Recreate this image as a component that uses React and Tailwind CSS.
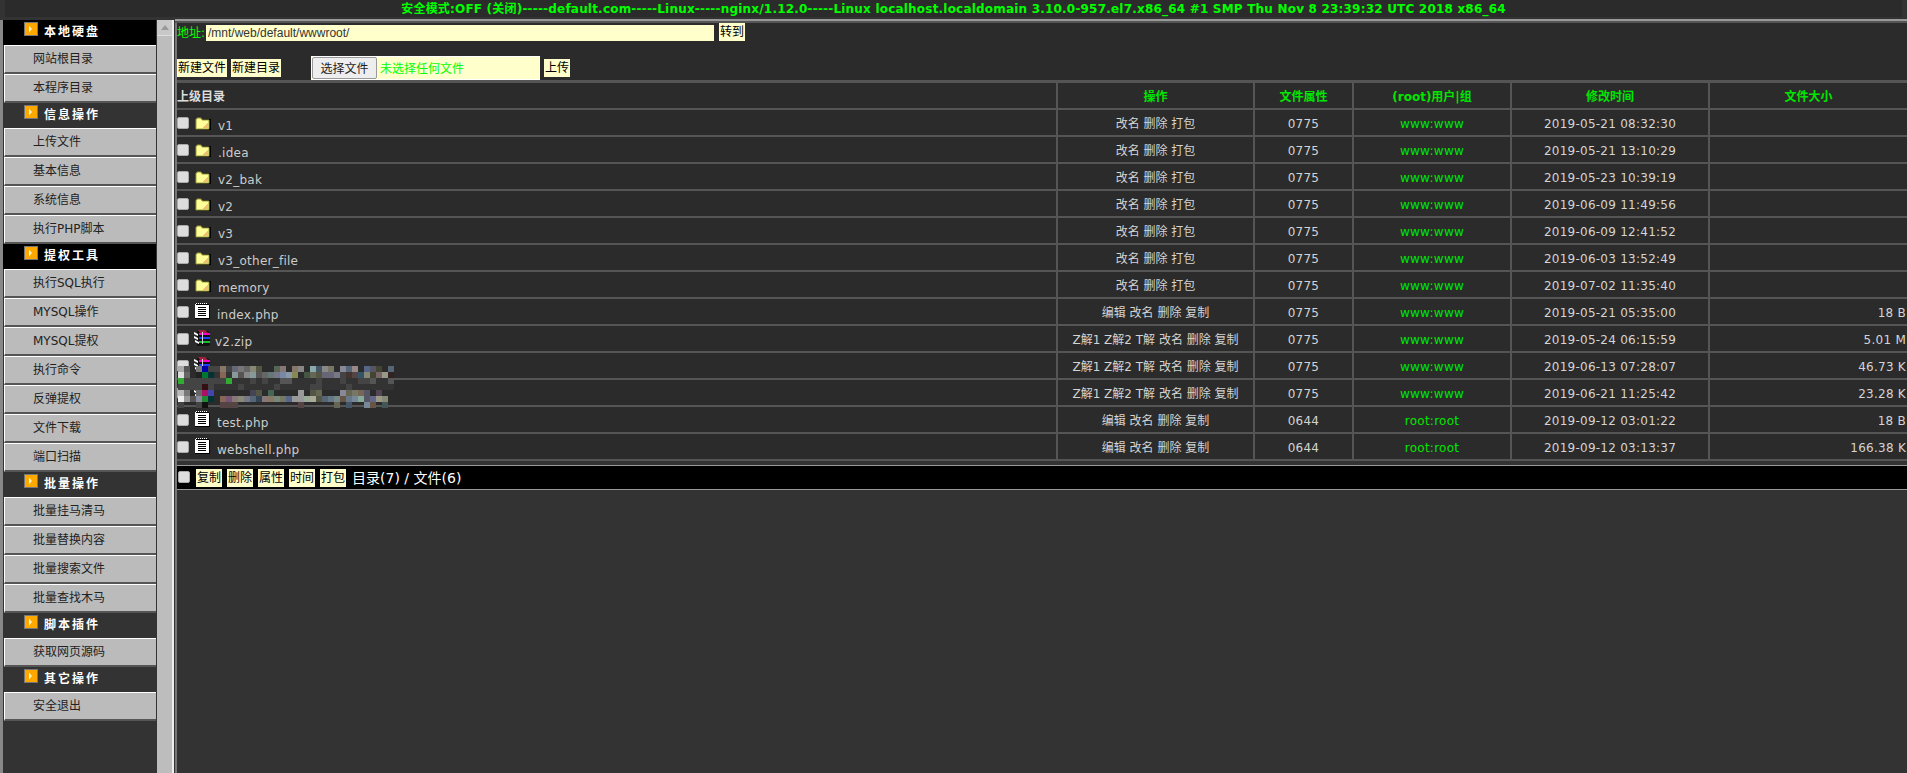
import React from 'react';

const FONT = "font-['DejaVu_Sans','Noto_Sans_CJK_SC',sans-serif]";

const menu = [
    { title: '本地硬盘', black: true, items: ['网站根目录', '本程序目录'] },
    { title: '信息操作', items: ['上传文件', '基本信息', '系统信息', '执行PHP脚本'] },
    { title: '提权工具', black: true, items: ['执行SQL执行', 'MYSQL操作', 'MYSQL提权', '执行命令', '反弹提权', '文件下载', '端口扫描'] },
    { title: '批量操作', items: ['批量挂马清马', '批量替换内容', '批量搜索文件', '批量查找木马'] },
    { title: '脚本插件', items: ['获取网页源码'] },
    { title: '其它操作', items: ['安全退出'] },
];

const DIR_OPS = '改名 删除 打包';
const FILE_OPS = '编辑 改名 删除 复制';
const ZIP_OPS = 'Z解1 Z解2 T解 改名 删除 复制';

const files = [
    { name: 'v1', type: 'dir', ops: DIR_OPS, mode: '0775', owner: 'www:www', time: '2019-05-21 08:32:30', size: '' },
    { name: '.idea', type: 'dir', ops: DIR_OPS, mode: '0775', owner: 'www:www', time: '2019-05-21 13:10:29', size: '' },
    { name: 'v2_bak', type: 'dir', ops: DIR_OPS, mode: '0775', owner: 'www:www', time: '2019-05-23 10:39:19', size: '' },
    { name: 'v2', type: 'dir', ops: DIR_OPS, mode: '0775', owner: 'www:www', time: '2019-06-09 11:49:56', size: '' },
    { name: 'v3', type: 'dir', ops: DIR_OPS, mode: '0775', owner: 'www:www', time: '2019-06-09 12:41:52', size: '' },
    { name: 'v3_other_file', type: 'dir', ops: DIR_OPS, mode: '0775', owner: 'www:www', time: '2019-06-03 13:52:49', size: '' },
    { name: 'memory', type: 'dir', ops: DIR_OPS, mode: '0775', owner: 'www:www', time: '2019-07-02 11:35:40', size: '' },
    { name: 'index.php', type: 'doc', ops: FILE_OPS, mode: '0775', owner: 'www:www', time: '2019-05-21 05:35:00', size: '18 B' },
    { name: 'v2.zip', type: 'zip', ops: ZIP_OPS, mode: '0775', owner: 'www:www', time: '2019-05-24 06:15:59', size: '5.01 M' },
    { name: '', type: 'zip', ops: ZIP_OPS, mode: '0775', owner: 'www:www', time: '2019-06-13 07:28:07', size: '46.73 K' },
    { name: '', type: 'zip', ops: ZIP_OPS, mode: '0775', owner: 'www:www', time: '2019-06-21 11:25:42', size: '23.28 K' },
    { name: 'test.php', type: 'doc', ops: FILE_OPS, mode: '0644', owner: 'root:root', time: '2019-09-12 03:01:22', size: '18 B' },
    { name: 'webshell.php', type: 'doc', ops: FILE_OPS, mode: '0644', owner: 'root:root', time: '2019-09-12 03:13:37', size: '166.38 K' },
];

// blurred file names, one string per 6px row of the mosaic
const mosaic = [
    'aaa 555 . 777 00a 444 444 876 444 667 777 666 887 554 . . 565 877 . 876 888 . 8aa 456 888 776 . 889 567 988 . 568 556 443 . 567',
    'ddd 666 . 222 073 033 333 865 333 899 555 888 899 555 666 677 778 78a 89a 885 . 454 665 554 667 667 778 444 433 544 356 887 443 766 998 322',
    '3a3 444 444 444 444 444 444 444 3a3 . . . 444 . 444 . . 555 555 . . . . 444 . . . 444 . . 444 444 555 . . 555',
    '444 444 444 444 311 444 . . . . 444 . . . . . 444 . . . . . 444 444 . . . . 444 . . . . . .',
    'bbb 777 . 666 a16 44a . . . . . . 445 554 . 465 . . . . 999 . 554 665 . . . 889 665 776 765 556 . 545 . .',
    'eee 999 555 889 283 033 . 865 757 877 887 778 567 345 877 876 787 776 568 999 999 9a9 aa9 554 567 678 788 654 678 789 8a9 556 668 998 887',
    '444 . . 444 111 . . 544 544 544 . . . . . . . . . . 544 . . . . . 665 . 456 . . 789 654 . 455',
];

const FolderIcon = () => (
    <svg width="16" height="13" viewBox="0 0 16 13" className="shrink-0 ml-[1px] mr-[7px]">
        <rect x="2" y="2" width="14" height="11" fill="#000" />
        <path d="M1 2h1V1h4v1h1v1h7v9H1z" fill="#ffff99" stroke="#99993a" strokeWidth="1" />
        <path d="M8 11h5V6h-1v1h-1v1h-1v1H9v1H8z" fill="#f0c070" />
    </svg>
);

const DocIcon = () => (
    <svg width="15" height="16" viewBox="0 0 15 16" className="shrink-0 ml-[1px] mr-[7px]">
        <rect x="0" y="1" width="14" height="15" fill="#fff" />
        <path d="M1 0.5h12" stroke="#fff" strokeDasharray="1 1" />
        <rect x="1" y="1" width="13" height="1" fill="#000" />
        <rect x="14" y="2" width="1" height="14" fill="#000" />
        <rect x="0" y="15" width="15" height="1" fill="#000" />
        <path d="M3 4.5h8M3 6.5h8M3 8.5h8M3 10.5h8M3 12.5h8" stroke="#000" strokeWidth="1" />
    </svg>
);

const ZipIcon = () => (
    <svg width="16" height="16" viewBox="0 0 16 16" className="shrink-0 mr-[5px]">
        <path d="M3 1h10l3 2v12l-2 1H3z" fill="#111" />
        <path d="M4 0h7l3 3H6z" fill="#a02040" />
        <path d="M0 2l4 2v2L0 4zM0 6l4 2v2L0 8zM1 10l4 2v2l-4-2z" fill="#fff" />
        <rect x="5" y="3" width="11" height="2" fill="#ff00cc" />
        <rect x="5" y="7" width="11" height="2" fill="#2040ff" />
        <rect x="5" y="11" width="11" height="2" fill="#10c030" />
        <rect x="8" y="2" width="1" height="12" fill="#d0d0d0" />
    </svg>
);

const ArrowIcon = () => (
    <svg width="14" height="14" viewBox="0 0 14 14" className="shrink-0">
        <rect x="0.5" y="0.5" width="13" height="13" fill="#ffa800" stroke="#777" />
        <path d="M5 3.5l3 3.5-3 3.5z" fill="#fff3c0" />
    </svg>
);

const Check = ({ className = '' }) => (
    <input
        type="checkbox"
        className={`appearance-none w-[12px] h-[12px] rounded-[2px] bg-[#dddddd] border border-[#aaaaaa] shrink-0 ${className}`}
    />
);

const YellowBtn = ({ children, className = '' }) => (
    <button className={`h-[18px] px-[1px] pt-[1px] bg-[#ffffcc] text-black text-[12px] leading-[17px] ${className}`}>
        {children}
    </button>
);

const Sidebar = () => (
    <div className="w-[153px] shrink-0 bg-[#333333]">
        {menu.map((group) => (
            <div key={group.title}>
                <div className={`h-[25px] pl-[21px] flex items-start gap-[6px] pt-[2px] ${group.black ? 'bg-black' : 'bg-[#333333]'}`}>
                    <ArrowIcon />
                    <span className="text-white font-bold text-[12px] leading-[20px] tracking-[2px]">{group.title}</span>
                </div>
                {group.items.map((item) => (
                    <div
                        key={item}
                        className="h-[29px] ml-[1px] pl-[28px] bg-[#bbbbbb] border-t border-l border-t-white border-l-white border-b-2 border-b-[#555555] text-[#222222] text-[12px] leading-[26px]"
                    >
                        {item}
                    </div>
                ))}
            </div>
        ))}
    </div>
);

const Scrollbar = () => (
    <div className="w-[15px] ml-[1px] shrink-0 bg-[#bdbdbd] flex flex-col">
        <div className="h-[16px] bg-[#c8c8c8] border-b border-[#dddddd] flex items-center justify-center">
            <div className="w-0 h-0 border-l-[4px] border-r-[4px] border-b-[5px] border-l-transparent border-r-transparent border-b-[#999999]" />
        </div>
    </div>
);

const Mosaic = () => (
    <svg width="216" height="42" viewBox="0 0 216 42" className="absolute left-[1px] top-[283px]">
        <rect x="0" y="12" width="216" height="12" fill="#333333" />
        {mosaic.map((row, y) =>
            row.split(' ').map((color, x) =>
                color === '.' ? null : (
                    <rect key={`${x}-${y}`} x={x * 6} y={y * 6} width="6" height="6" fill={`#${color}`} />
                )
            )
        )}
    </svg>
);

const FileRow = ({ file }) => {
    const cell = 'h-[27px] p-0 pt-[2px] border-r-2 border-b-2 border-[#555555] text-center align-middle';
    return (
        <tr>
            <td className="h-[27px] p-0 border-r-2 border-b-2 border-[#555555]">
                <div className="flex items-start h-[25px]">
                    <Check className="mt-[7px] mr-[5px]" />
                    <span className={file.type === 'dir' ? 'mt-[7px] flex' : 'mt-[4px] flex'}>
                        {file.type === 'dir' && <FolderIcon />}
                        {file.type === 'doc' && <DocIcon />}
                        {file.type === 'zip' && <ZipIcon />}
                    </span>
                    <span className="mt-[7px] leading-[18px] text-[#cccccc] tracking-[0.25px]">{file.name}</span>
                </div>
            </td>
            <td className={`${cell} text-[#d4d4d4]`}>{file.ops}</td>
            <td className={`${cell} text-[#d4d4d4] tracking-[0.25px]`}>{file.mode}</td>
            <td className={`${cell} text-[#00e600] tracking-[0.25px]`}>{file.owner}</td>
            <td className={`${cell} text-[#d4d4d4] tracking-[0.25px]`}>{file.time}</td>
            <td className="h-[27px] p-0 pt-[2px] pr-[1px] border-b-2 border-[#555555] text-right text-[#d4d4d4] tracking-[0.25px]">{file.size}</td>
        </tr>
    );
};

const FileTable = () => {
    const head = 'h-[27px] p-0 pt-[3px] border-r-2 border-b-2 border-[#555555] text-center font-bold text-[#00e600]';
    return (
        <div className="relative border-t-[3px] border-[#555555]">
            <table className="table-fixed w-[1730px] border-separate border-spacing-0 bg-[#2b2b2b] text-[12px]">
                <colgroup>
                    <col className="w-[881px]" />
                    <col className="w-[197px]" />
                    <col className="w-[99px]" />
                    <col className="w-[158px]" />
                    <col className="w-[198px]" />
                    <col className="w-[197px]" />
                </colgroup>
                <thead>
                    <tr>
                        <th className="h-[27px] p-0 pt-[3px] border-r-2 border-b-2 border-[#555555] text-left font-bold text-[#dddddd]">上级目录</th>
                        <th className={head}>操作</th>
                        <th className={head}>文件属性</th>
                        <th className={head}>(root)用户|组</th>
                        <th className={head}>修改时间</th>
                        <th className="h-[27px] p-0 pt-[3px] border-b-2 border-[#555555] text-center font-bold text-[#00e600]">文件大小</th>
                    </tr>
                </thead>
                <tbody>
                    {files.map((file) => (
                        <FileRow key={file.time} file={file} />
                    ))}
                </tbody>
            </table>
            <Mosaic />
        </div>
    );
};

export default function App() {
    return (
        <div className={`h-[773px] w-[1907px] overflow-hidden bg-[#333333] text-[12px] ${FONT}`}>
            <div className="h-[17px] mx-[5px] bg-[#2b2b2b] text-center font-bold text-[#00ff00] leading-[18px] tracking-[0.2px]">
                安全模式:OFF (关闭)-----default.com-----Linux-----nginx/1.12.0-----Linux localhost.localdomain 3.10.0-957.el7.x86_64 #1 SMP Thu Nov 8 23:39:32 UTC 2018 x86_64
            </div>
            <div className="h-[3px]" />
            <div className="flex h-[753px] border-l-[3px] border-[#888888]">
                <Sidebar />
                <Scrollbar />
                <div className="w-[2px] shrink-0 bg-[#eeeeee]" />
                <div className="w-[1px] shrink-0 bg-[#333333]" />
                <div className="flex-1 min-w-0 flex flex-col border-l-2 border-[#777777]">
                    <div className="relative">
                        <div className="absolute -top-[1px] -left-[2px] w-[1732px] h-[4px] bg-[#999999] border-b-2 border-[#555555]" />
                    </div>
                    <div className="h-[60px] bg-[#2b2b2b] pt-[3px]">
                        <div className="flex items-end h-[18px]">
                            <span className="text-[#00ff00] w-[29px] shrink-0 leading-[16px]">地址:</span>
                            <input
                                readOnly
                                value="/mnt/web/default/wwwroot/"
                                className="w-[508px] h-[16px] bg-[#ffffcc] text-[#333333] text-[12px] font-['Liberation_Sans',sans-serif] px-[2px] outline-none"
                            />
                            <YellowBtn className="ml-[5px]">转到</YellowBtn>
                        </div>
                        <div className="flex items-end h-[39px]">
                            <div className="flex items-center gap-[4px] mb-[3px]">
                                <YellowBtn>新建文件</YellowBtn>
                                <YellowBtn>新建目录</YellowBtn>
                            </div>
                            <div className="ml-[30px] w-[229px] h-[24px] bg-[#ffffcc] border border-white flex items-center">
                                <button className="w-[65px] h-[22px] pt-[1px] bg-[#eeeeee] border border-[#999999] rounded-[2px] text-[#222222] text-[12px]">选择文件</button>
                                <span className="ml-[3px] pt-[1px] text-[#00ff00]">未选择任何文件</span>
                            </div>
                            <YellowBtn className="ml-[4px] mb-[3px]">上传</YellowBtn>
                        </div>
                    </div>
                    <FileTable />
                    <div className="mt-[4px] h-[25px] bg-black border-y border-[#999999] flex items-center text-white">
                        <Check className="ml-[1px] mr-[6px] -mt-[1px]" />
                        <div className="flex items-center gap-[5px]">
                            <YellowBtn>复制</YellowBtn>
                            <YellowBtn>删除</YellowBtn>
                            <YellowBtn>属性</YellowBtn>
                            <YellowBtn>时间</YellowBtn>
                            <YellowBtn>打包</YellowBtn>
                        </div>
                        <span className="ml-[6px] pt-[1px] text-[14px]">目录(7) / 文件(6)</span>
                    </div>
                </div>
            </div>
        </div>
    );
}
